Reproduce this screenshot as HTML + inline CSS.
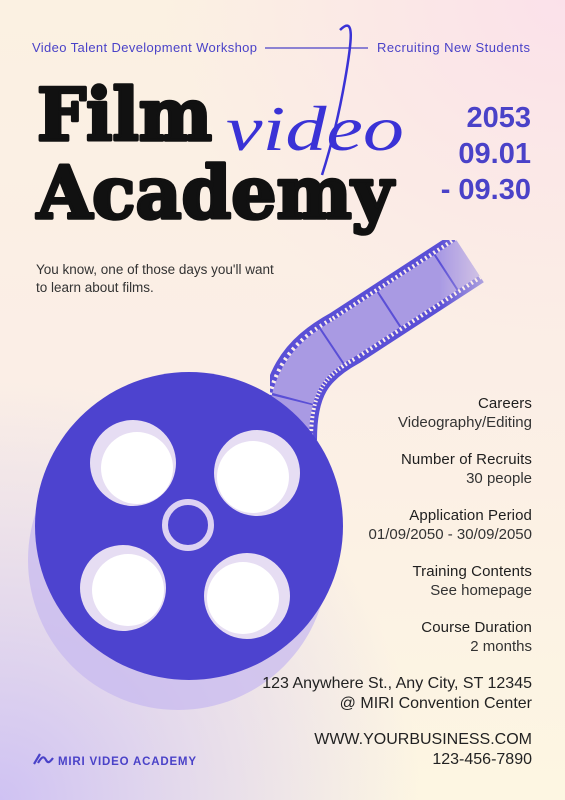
<!DOCTYPE html>
<html><head><meta charset="utf-8"><style>
*{margin:0;padding:0}
body{width:565px;height:800px;overflow:hidden;position:relative;font-family:"Liberation Sans",sans-serif;
background:
radial-gradient(ellipse 420px 420px at 0px 800px,#cfc2f3 0%,rgba(212,200,242,0.6) 45%,rgba(212,200,242,0) 100%),
radial-gradient(ellipse 400px 350px at 565px 0px,#fbe1ea 0%,rgba(251,225,234,0) 100%),
linear-gradient(180deg,#fbf1e2 0%,#fbeee6 45%,#fdf6e2 100%);}
.abs{position:absolute}
.r{right:33px;text-align:right;color:#333;font-size:15px;line-height:19px}
.r b{font-weight:normal;color:#1e1e1e;letter-spacing:0.1px}
</style></head><body>
<svg class="abs" style="left:0;top:0" width="565" height="800">
 <defs><linearGradient id="fade" gradientUnits="userSpaceOnUse" x1="440" y1="0" x2="515" y2="0"><stop offset="0" stop-color="#fff" stop-opacity="1"/><stop offset="1" stop-color="#fff" stop-opacity="0.1"/></linearGradient>
 <mask id="m"><rect width="565" height="800" fill="url(#fade)"/></mask></defs>
 <text x="32" y="52" font-size="13" fill="#4a42c8" font-family="Liberation Sans" textLength="225">Video Talent Development Workshop</text>
 <line x1="265" y1="48" x2="368" y2="48" stroke="#4a42c8" stroke-width="1.2"/>
 <text x="377" y="52" font-size="13" fill="#4a42c8" font-family="Liberation Sans" textLength="153">Recruiting New Students</text>
 <g font-weight="bold" font-family="DejaVu Serif" fill="#111" stroke="#111" stroke-width="3.5" stroke-linejoin="round">
 <text x="37" y="140" font-size="72" textLength="175" lengthAdjust="spacingAndGlyphs">Film</text>
 <text x="37" y="218" font-size="72" textLength="356" lengthAdjust="spacingAndGlyphs">Academy</text>
 </g>
 <!-- film strip -->
 <g mask="url(#m)">
 <path d="M288 440 C288 385,305 360,345 338 L468 258" stroke="#5a4fd6" stroke-width="58" fill="none"/>
 <path d="M288 440 C288 385,305 360,345 338 L468 258" stroke="#fbeee9" stroke-width="50" stroke-dasharray="2 3" fill="none"/>
 <path d="M288 440 C288 385,305 360,345 338 L468 258" stroke="#a99ae3" stroke-width="42" fill="none"/>
 <path d="M288 440 C288 385,305 360,345 338 L468 258" stroke="#5a4fd6" stroke-width="42" stroke-dasharray="2 66" stroke-dashoffset="-40" fill="none"/>
 </g>
 <path d="M340 30 C355 15,352 40,345 80 C338 120,330 150,322 175" stroke="#3a32d6" stroke-width="2.5" fill="none"/>
 <text x="226" y="150" font-size="64" font-style="italic" font-family="Liberation Serif" fill="#3a32d6" textLength="178" lengthAdjust="spacingAndGlyphs">video</text>
 <g font-family="Liberation Sans" font-weight="bold" fill="#4a42c8" font-size="29" text-anchor="end">
  <text x="531" y="127">2053</text><text x="531" y="163">09.01</text><text x="531" y="199">- 09.30</text>
 </g>
 <text x="36" y="274" font-size="13.5" fill="#333" font-family="Liberation Sans">You know, one of those days you'll want</text>
 <text x="36" y="292" font-size="13.5" fill="#333" font-family="Liberation Sans">to learn about films.</text>
 <!-- reel shadow -->
 <circle cx="178" cy="560" r="150" fill="#c6b8ef" opacity="0.7"/>
 <circle cx="189" cy="526" r="154" fill="#4d43cf"/>
 <g fill="#e6ddf3"><circle cx="133" cy="463" r="43"/><circle cx="257" cy="473" r="43"/><circle cx="123" cy="588" r="43"/><circle cx="247" cy="596" r="43"/></g>
 <g fill="#fff"><circle cx="137" cy="468" r="36"/><circle cx="253" cy="477" r="36"/><circle cx="128" cy="590" r="36"/><circle cx="243" cy="598" r="36"/></g>
 <circle cx="188" cy="525" r="23" fill="none" stroke="#ddd2f3" stroke-width="6"/>
 <!-- logo -->
 <path d="M34 764 L40 754 M38 763 C42 756,44 756,46 760 C48 764,50 762,53 758" stroke="#4a42c8" stroke-width="2.2" fill="none"/>
 <text x="58" y="765" font-size="11.5" font-weight="bold" fill="#4a42c8" font-family="Liberation Sans" textLength="138">MIRI VIDEO ACADEMY</text>
</svg>
<div class="abs r" style="top:394px"><b>Careers</b><br>Videography/Editing</div>
<div class="abs r" style="top:450px"><b>Number of Recruits</b><br>30 people</div>
<div class="abs r" style="top:506px"><b>Application Period</b><br>01/09/2050 - 30/09/2050</div>
<div class="abs r" style="top:562px"><b>Training Contents</b><br>See homepage</div>
<div class="abs r" style="top:618px"><b>Course Duration</b><br>2 months</div>
<div class="abs r" style="top:674px;font-size:16px;line-height:20px;color:#222">123 Anywhere St., Any City, ST 12345<br>@ MIRI Convention Center</div>
<div class="abs r" style="top:730px;font-size:16px;line-height:20px;color:#222">WWW.YOURBUSINESS.COM<br>123-456-7890</div>
</body></html>
